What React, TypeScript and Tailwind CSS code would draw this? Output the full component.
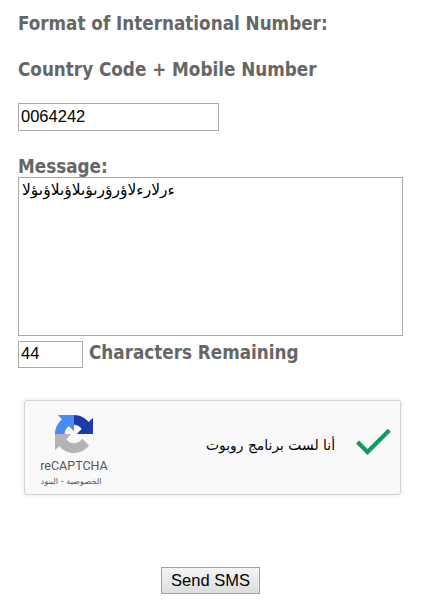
import type { ReactNode } from "react";

function Label({ width, children }: { width: string; children: ReactNode }) {
  return (
    <span
      className={`${width} block h-6 whitespace-nowrap font-['DejaVu_Sans_Condensed','DejaVu_Sans',sans-serif] text-[18.7px] font-bold leading-6 text-[#666666] [font-stretch:condensed]`}
    >
      {children}
    </span>
  );
}

function RecaptchaLogo() {
  return (
    <svg className="h-[38px] w-[38px]" viewBox="0 0 64 64" aria-hidden="true">
      <path fill="#4a8af4" d="M32 0H4.6l7.2 7.2C4.6 13.1 0 22 0 32h16.3c0-.5 0-.8.1-1.1.4-5 3.1-9.3 7.1-11.8l8.5 8.3z" />
      <path fill="#1c3aa9" d="M64 32V4.7l-7.2 7.2C50.9 4.7 42 0 32 0v16.3c.5 0 .8 0 1.1.1 5 .4 9.3 3.1 11.8 7.1L36.6 32z" />
      <path fill="#b4b4b4" d="M0 32v27.3l7.2-7.2C13 59.3 22 64 32 64c10.4 0 19.6-5 25.5-12.6L45.8 39.5c-1.2 2.1-2.8 3.9-4.8 5.3-2 1.6-4.9 2.9-8.9 2.9-.5 0-.9 0-1.2-.1-5-.4-9.3-3.1-11.8-7.1l8.3-8.5z" />
    </svg>
  );
}

function Recaptcha() {
  return (
    <div className="ml-1.5 mt-8 flex h-[95px] w-[377px] rounded-[3px] border border-[#d3d3d3] bg-[#f9f9f9] shadow-[0_0_4px_1px_rgba(0,0,0,0.08)]">
      <div className="flex w-[98px] flex-col items-center pt-[14px]">
        <RecaptchaLogo />
        <span className="mt-[5px] font-[Roboto,sans-serif] text-[12.5px] leading-4 text-[#555555]">
          reCAPTCHA
        </span>
        <span dir="rtl" className="mr-1.5 whitespace-nowrap font-['DejaVu_Sans',sans-serif] text-[8.2px] leading-[15px] text-[#555555]">
          الخصوصية - البنود
        </span>
      </div>
      <div className="flex flex-1 items-start justify-end pr-[9px]">
        <span dir="rtl" className="mr-5 mt-8 whitespace-nowrap font-['DejaVu_Sans',sans-serif] text-[13.9px] leading-6 text-black">
          أنا لست برنامج روبوت
        </span>
        <svg className="mt-[27px] h-7 w-9" viewBox="0 0 36 28" aria-hidden="true">
          <path d="M2.5 14 12.5 24 34.3 2.2" fill="none" stroke="#0a9f5b" strokeWidth="4.2" />
        </svg>
      </div>
    </div>
  );
}

export default function App() {
  return (
    <form className="h-[611px] w-[447px] overflow-hidden bg-white pl-[18px] pt-3">
      <Label width="w-[320px]">Format of International Number:</Label>
      <div className="mt-[22px]">
        <Label width="w-[320px]">Country Code + Mobile Number</Label>
      </div>
      <input
        defaultValue="0064242"
        className="mt-[21px] block h-7 w-[201px] border border-[#a9a9a9] bg-white px-0.5 pb-0.5 font-['Liberation_Sans',sans-serif] text-[16.5px] text-black outline-none"
      />
      <div className="mt-6">
        <Label width="w-[100px]">Message:</Label>
      </div>
      <textarea
        defaultValue="ءرلارءلاؤرؤرىؤىلاؤىلاؤىؤلا"
        className="-mt-0.5 block h-[159px] w-[385px] resize-none overflow-hidden border border-[#a9a9a9] bg-white px-[3px] py-0.5 font-['DejaVu_Sans',sans-serif] text-[15.5px] leading-5 text-black outline-none"
      />
      <div className="mt-[5px] flex">
        <input
          defaultValue="44"
          className="h-[27px] w-[65px] border border-[#a9a9a9] bg-white px-0.5 pb-0.5 font-['Liberation_Sans',sans-serif] text-[16.5px] text-black outline-none"
        />
        <div className="ml-1.5">
          <Label width="w-[220px]">Characters Remaining</Label>
        </div>
      </div>
      <Recaptcha />
      <button
        type="button"
        className="ml-[143px] mt-[72px] block h-[27px] w-[99px] border border-[#a0a0a0] bg-linear-to-b from-[#f5f5f5] to-[#dddddd] pb-0.5 font-['Liberation_Sans',sans-serif] text-[16.5px] leading-6 text-black"
      >
        Send SMS
      </button>
    </form>
  );
}
